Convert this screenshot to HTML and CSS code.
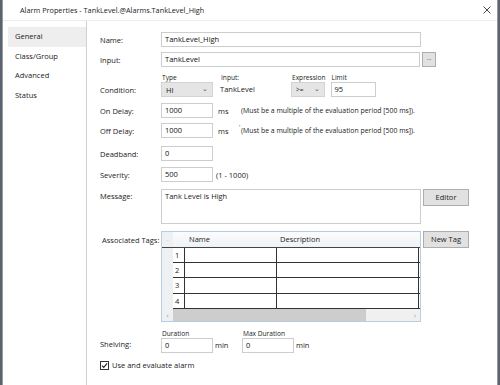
FILE: index.html
```html
<!DOCTYPE html>
<html>
<head>
<meta charset="utf-8">
<link rel="stylesheet" href="styles.css">
</head>
<body>
<div class="window">
  <div class="titlebar">
    <span class="title">Alarm Properties - TankLevel.@Alarms.TankLevel_High</span>
    <svg class="close" width="8" height="8" viewBox="0 0 8 8"><path d="M0.5 0.5L7.5 7.5M7.5 0.5L0.5 7.5" stroke="#333" stroke-width="0.9" fill="none"/></svg>
  </div>
  <div class="body">
    <nav class="nav">
      <div class="nav-item active">General</div>
      <div class="nav-item">Class/Group</div>
      <div class="nav-item">Advanced</div>
      <div class="nav-item">Status</div>
    </nav>
    <div class="form">
      <div class="row r-name">
        <label class="lbl">Name:</label>
        <div class="field"><div class="input wide">TankLevel_High</div></div>
      </div>
      <div class="row r-input">
        <label class="lbl">Input:</label>
        <div class="field"><div class="input wide2">TankLevel</div><div class="btn dots">...</div></div>
      </div>
      <div class="row r-cond">
        <label class="lbl">Condition:</label>
        <div class="field cond">
          <div class="sub s-type"><span class="cap">Type</span><div class="select w52"><span>HI</span><span class="chev">&#8964;</span></div></div>
          <div class="sub s-in"><span class="cap">Input:</span><div class="plain">TankLevel</div></div>
          <div class="sub s-exp"><span class="cap">Expression</span><div class="select w34"><span>&gt;=</span><span class="chev">&#8964;</span></div></div>
          <div class="sub s-lim"><span class="cap">Limit</span><div class="input w45">95</div></div>
        </div>
      </div>
      <div class="row r-on">
        <label class="lbl">On Delay:</label>
        <div class="field"><div class="input w52">1000</div><span class="unit">ms</span><span class="note">(Must be a multiple of the evaluation period [500 ms]).</span></div>
      </div>
      <div class="row r-off">
        <label class="lbl">Off Delay:</label>
        <div class="field"><div class="input w52">1000</div><span class="unit">ms</span><span class="note"><sup class="tick">'</sup>(Must be a multiple of the evaluation period [500 ms]).</span></div>
      </div>
      <div class="row r-dead">
        <label class="lbl">Deadband:</label>
        <div class="field"><div class="input w52">0</div></div>
      </div>
      <div class="row r-sev">
        <label class="lbl">Severity:</label>
        <div class="field"><div class="input w52">500</div><span class="range">(1 - 1000)</span></div>
      </div>
      <div class="row r-msg">
        <label class="lbl">Message:</label>
        <div class="field top"><div class="textarea">Tank Level is High</div><div class="btn big">Editor</div></div>
      </div>
      <div class="row r-tags">
        <label class="lbl tags-lbl">Associated Tags:</label>
        <div class="field top">
          <div class="grid">
            <div class="g-head">
              <div class="g-strip"><span class="dot">.</span></div>
              <div class="g-num h"></div>
              <div class="g-name h">Name</div>
              <div class="g-desc h">Description</div>
            </div>
            <div class="g-row"><div class="g-strip"></div><div class="g-num">1</div><div class="g-name"></div><div class="g-desc"></div></div>
            <div class="g-row"><div class="g-strip"></div><div class="g-num">2</div><div class="g-name"></div><div class="g-desc"></div></div>
            <div class="g-row"><div class="g-strip"></div><div class="g-num">3</div><div class="g-name"></div><div class="g-desc"></div></div>
            <div class="g-row"><div class="g-strip"></div><div class="g-num">4</div><div class="g-name"></div><div class="g-desc"></div></div>
            <div class="g-scroll">
              <div class="g-strip sc"><span class="arr">&lsaquo;</span></div>
              <div class="thumb"></div>
              <div class="track"><span class="arr">&rsaquo;</span></div>
            </div>
          </div>
          <div class="btn big">New Tag</div>
        </div>
      </div>
      <div class="row r-shelf">
        <label class="lbl">Shelving:</label>
        <div class="field">
          <div class="sub"><span class="cap">Duration</span><div class="input w52">0</div></div>
          <span class="unit2">min</span>
          <div class="sub"><span class="cap">Max Duration</span><div class="input w52">0</div></div>
          <span class="unit2">min</span>
        </div>
      </div>
      <div class="check-row">
        <svg class="cb" width="9" height="9" viewBox="0 0 9 9"><rect x="0.5" y="0.5" width="8" height="8" fill="#fff" stroke="#333"/><path d="M2 4.6L3.7 6.4L7.1 2.4" stroke="#222" stroke-width="1.1" fill="none"/></svg>
        <span>Use and evaluate alarm</span>
      </div>
    </div>
  </div>
</div>
</body>
</html>
```
FILE: styles.css
```css
* { box-sizing: border-box; }
html, body { margin: 0; padding: 0; }
body {
  width: 500px;
  height: 385px;
  overflow: hidden;
  background: #5a6470;
  font-family: "Open Sans", "Noto Sans", sans-serif;
  font-size: 7.5px;
  color: #222;
}
.window {
  margin-left: 2px;
  width: 496px;
  height: 385px;
  background: #fff;
  border-left: 1px solid #9a9a9a;
  border-right: 1px solid #9a9a9a;
  display: flex;
  flex-direction: column;
}
.titlebar {
  height: 21px;
  flex: 0 0 21px;
  display: flex;
  align-items: center;
  justify-content: space-between;
  padding: 0 6px 0 17px;
  border-bottom: 1px solid #ececec;
}
.title { font-size: 7.3px; color: #222; }
.close { margin-right: 0; }
.body {
  flex: 1;
  display: flex;
}
.nav {
  width: 84px;
  padding: 6px 0 0 5px;
  border-right: 1px solid #d0d0d0;
}
.nav-item {
  height: 19.5px;
  line-height: 19.5px;
  padding-left: 7px;
  color: #222;
}
.nav-item.active { background: #eeeeee; }
.form {
  flex: 1;
  padding: 11px 0 0 13px;
  display: flex;
  flex-direction: column;
}
.row {
  display: grid;
  grid-template-columns: 61px 1fr;
  align-items: center;
}
.lbl { color: #222; }
.field { display: flex; align-items: center; }
.field.top { align-items: flex-start; }
.input {
  height: 15px;
  border: 1px solid #cdcdcd;
  background: #fff;
  padding: 0 3px;
  line-height: 13px;
  color: #111;
}
.wide { width: 260px; }
.wide2 { width: 259px; }
.w52 { width: 52px; }
.w45 { width: 45px; }
.w34 { width: 34px; }
.btn {
  background: #e1e1e1;
  border: 1px solid #adadad;
  text-align: center;
  color: #222;
}
.dots { width: 14px; height: 15px; margin-left: 2px; line-height: 11px; font-size: 6px; }
.big { width: 46px; height: 17px; line-height: 15px; margin-left: 2px; }
.r-input { margin-top: 5px; }
.r-cond { margin-top: 6px; align-items: end; }
.r-cond .lbl { padding-bottom: 2px; }
.cond { align-items: flex-end; }
.sub { display: flex; flex-direction: column; }
.cap { font-size: 6.6px; line-height: 9px; padding-left: 1px; color: #222; }
.s-in { margin-left: 7px; width: 71px; }
.s-exp { margin-left: 0; }
.s-lim { margin-left: 5px; }
.plain { height: 15px; line-height: 15px; }
.select {
  height: 15px;
  background: #e5e5e5;
  border: 1px solid #d3d3d3;
  display: flex;
  justify-content: space-between;
  align-items: center;
  padding: 0 4px 0 4px;
}
.w34 { font-size: 6.5px; }
.chev { font-size: 7px; color: #555; line-height: 7px; margin-top: -3px; }
.r-on { margin-top: 6px; }
.r-off { margin-top: 5px; }
.r-dead { margin-top: 8px; }
.r-sev { margin-top: 6px; }
.r-msg { margin-top: 7px; align-items: start; }
.r-msg .lbl { padding-top: 2px; }
.unit { margin-left: 5px; width: 23px; }
.note { font-size: 6.9px; position: relative; }
.tick { position: absolute; left: -2px; top: -3px; font-size: 6px; }
.range { margin-left: 3px; }
.textarea {
  width: 260px;
  height: 35px;
  border: 1px solid #cdcdcd;
  padding: 1px 3px;
}
.r-tags { margin-top: 7px; align-items: start; }
.tags-lbl { padding-left: 2px; padding-top: 4px; }
.grid {
  width: 260px;
  height: 91px;
  border: 1px solid #b9cde0;
  display: flex;
  flex-direction: column;
  background: #fff;
}
.g-head, .g-row, .g-scroll { display: flex; }
.g-head { height: 16px; background: linear-gradient(#fbfcfd, #eef2f6); border-bottom: 1px solid #444; }
.g-row { height: 15px; border-bottom: 1px solid #333; }
.g-row:nth-child(3) { height: 15px; }
.g-row:nth-child(4) { height: 16px; }
.g-row:nth-child(5) { height: 15px; }
.g-strip { width: 11px; background: #eef1f4; flex: 0 0 11px; position: relative; }
.g-row .g-strip { border-bottom: 1px solid #eef1f4; margin-bottom: -1px; }
.dot { position: absolute; left: 5px; top: 3px; font-size: 6px; color: #888; }
.g-num { width: 12px; flex: 0 0 12px; border-right: 1px solid #333; padding-left: 2px; line-height: 14px; }
.g-num.h { border-right: none; }
.g-name { width: 92px; flex: 0 0 92px; border-right: 1px solid #333; }
.g-desc { flex: 0 0 142px; border-right: 1px solid #333; }
.h { border-right: none; line-height: 15px; padding-left: 3px; }
.g-name.h { padding-left: 4px; }
.g-scroll { flex: 1; }
.g-strip.sc { display: flex; align-items: center; justify-content: center; }
.thumb { width: 193px; background: #cdcdcd; }
.track { flex: 1; background: #f0f0f0; position: relative; }
.arr { font-size: 7px; color: #999; }
.track .arr { position: absolute; right: 4px; top: 2px; }
.r-shelf { margin-top: 7px; align-items: end; }
.r-shelf .lbl { padding-bottom: 4px; }
.r-shelf .field { align-items: flex-end; }
.unit2 { margin-left: 2px; width: 27px; line-height: 15px; }
.check-row { margin-top: 7px; display: flex; align-items: center; gap: 3px; font-size: 7.5px; }
```
